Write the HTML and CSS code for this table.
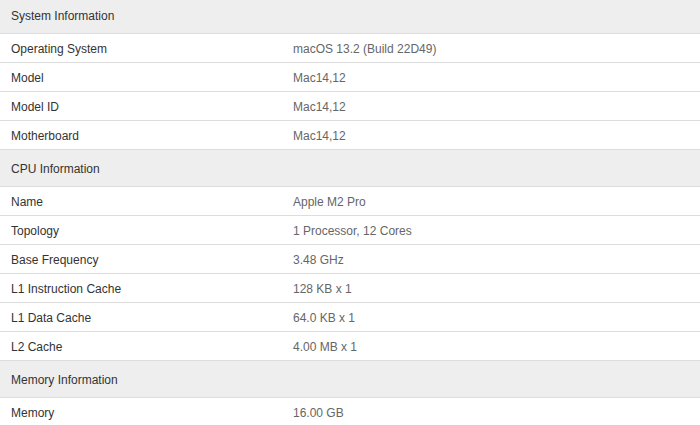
FILE: index.html
```html
<!DOCTYPE html>
<html>
<head>
<meta charset="utf-8">
<link rel="stylesheet" href="styles.css">
</head>
<body>
<div class="sheet">
  <div class="section-head">System Information</div>
  <div class="row"><div class="name">Operating System</div><div class="value">macOS 13.2 (Build 22D49)</div></div>
  <div class="row"><div class="name">Model</div><div class="value">Mac14,12</div></div>
  <div class="row"><div class="name">Model ID</div><div class="value">Mac14,12</div></div>
  <div class="row"><div class="name">Motherboard</div><div class="value">Mac14,12</div></div>
  <div class="section-head">CPU Information</div>
  <div class="row"><div class="name">Name</div><div class="value">Apple M2 Pro</div></div>
  <div class="row"><div class="name">Topology</div><div class="value">1 Processor, 12 Cores</div></div>
  <div class="row"><div class="name">Base Frequency</div><div class="value">3.48 GHz</div></div>
  <div class="row"><div class="name">L1 Instruction Cache</div><div class="value">128 KB x 1</div></div>
  <div class="row"><div class="name">L1 Data Cache</div><div class="value">64.0 KB x 1</div></div>
  <div class="row"><div class="name">L2 Cache</div><div class="value">4.00 MB x 1</div></div>
  <div class="section-head">Memory Information</div>
  <div class="row"><div class="name">Memory</div><div class="value">16.00 GB</div></div>
</div>
</body>
</html>
```

FILE: styles.css
```css
html, body {
  margin: 0;
  padding: 0;
  background: #ffffff;
  overflow: hidden;
}
.sheet {
  margin-top: -3px;
  font-family: "Liberation Sans", Arial, sans-serif;
  font-size: 12px;
}
.section-head {
  height: 35px;
  padding-top: 1px;
  border-bottom: 1px solid #dddddd;
  background: #eeeeee;
  color: #333333;
  padding-left: 11px;
  display: flex;
  align-items: center;
}
.row {
  height: 27px;
  padding-top: 1px;
  border-bottom: 1px solid #dddddd;
  background: #ffffff;
  display: grid;
  grid-template-columns: 282px 1fr;
  align-items: center;
}
.name {
  padding-left: 11px;
  color: #333333;
}
.value {
  padding-left: 11px;
  color: #666666;
}
```
